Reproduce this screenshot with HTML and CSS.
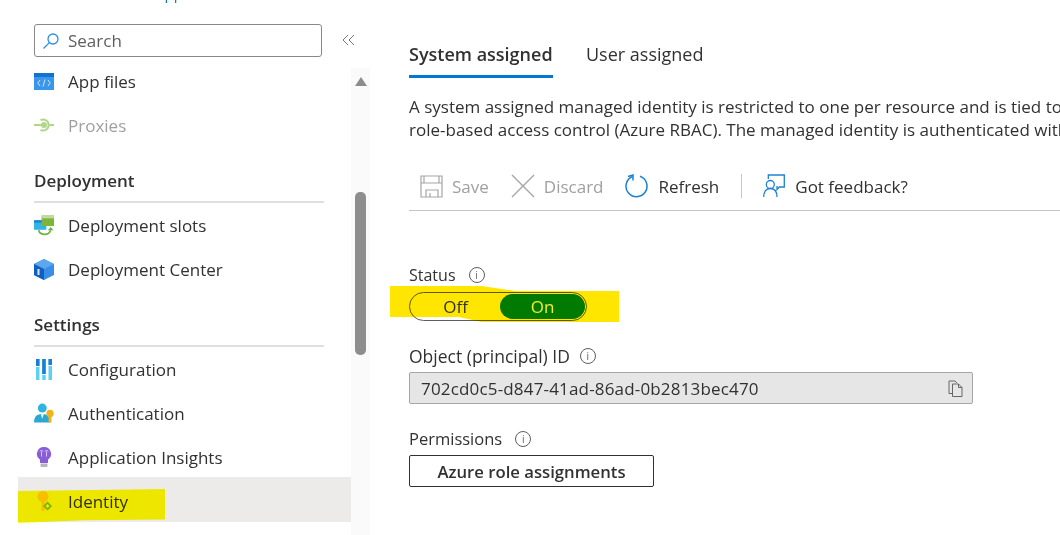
FILE: index.html
```html
<!DOCTYPE html>
<html lang="en">
  <head>
    <meta charset="UTF-8" />
    <meta name="viewport" content="width=device-width, initial-scale=1.0" />
    <title>Identity</title>
    <link rel="stylesheet" href="styles.css">
  </head>
  <body>
    <aside class="sidebar">
      <div class="crumb"><span>App</span></div>
      <div class="search-row">
        <div class="search">
          <svg class="search-icon" width="18" height="18" viewBox="0 0 18 18" fill="none" stroke="#2d8fdf" stroke-width="1.3"><circle cx="11" cy="7" r="5"/><path d="M7.4 10.6 1.5 16.5"/></svg>
          <span>Search</span>
        </div>
        <svg class="collapse" width="13" height="12" viewBox="0 0 13 12" fill="none" stroke="#777" stroke-width="1"><path d="M6 1 1 6l5 5M12 1 7 6l5 5"/></svg>
      </div>
      <div class="sidebar-body">
        <nav class="nav">
          <a class="nav-item">
            <svg width="20" height="17" viewBox="0 0 20 17"><rect width="20" height="17" fill="#3a96ea"/><rect width="20" height="4" fill="#1272cf"/><path d="M6 7 3.8 10 6 13M14 7l2.200 3-2.200 3M11 6.500 9 13.500" fill="none" stroke="#cfe6fb" stroke-width="1"/></svg>
            <span>App files</span>
          </a>
          <a class="nav-item disabled">
            <svg width="20" height="14" viewBox="0 0 20 14" fill="none" stroke="#b0d68a" stroke-width="2"><path d="M0 7h10M15.500 7H20"/><circle cx="10" cy="7" r="2" fill="#b0d68a"/><path d="M6.500 2.200a5.500 5.500 0 1 1 0 9.600"/></svg>
            <span>Proxies</span>
          </a>

          <h2 class="nav-title">Deployment</h2>
          <a class="nav-item">
            <svg width="21" height="21" viewBox="0 0 21 21"><rect x="0" y="5" width="13" height="10" fill="#35b3e6"/><rect x="0" y="5" width="13" height="2.500" fill="#1b85c9"/><rect x="8" y="0" width="13" height="11" fill="#7db53a"/><rect x="8" y="0" width="13" height="3" fill="#c3d9a0"/><path d="M5 15.500c1 5 10 6.500 12.500 0" fill="none" stroke="#6cb33f" stroke-width="1.800"/><path d="M14.500 15.500h6L17.500 12z" fill="#6cb33f"/></svg>
            <span>Deployment slots</span>
          </a>
          <a class="nav-item">
            <svg width="20" height="21" viewBox="0 0 20 21"><path d="M10 0 20 5v11l-10 5L0 16V5z" fill="#3a8ee6"/><path d="M10 0 20 5 10 10 0 5z" fill="#5ea7ee"/><path d="M10 10v11L0 16V5z" fill="#0f5fc0"/><path d="M4.500 10v6" stroke="#d7e9fb" stroke-width="2"/></svg>
            <span>Deployment Center</span>
          </a>

          <h2 class="nav-title">Settings</h2>
          <a class="nav-item">
            <svg width="16" height="21" viewBox="0 0 16 21"><rect x="0" width="3.500" height="21" fill="#5cd1f2"/><rect x="0" width="3.500" height="7" fill="#1a7fd4"/><rect x="0" y="7" width="3.500" height="1" fill="#fff"/><rect x="6.200" width="3.500" height="21" fill="#5cd1f2"/><rect x="6.200" width="3.500" height="15" fill="#1a7fd4"/><rect x="6.200" y="15" width="3.500" height="1" fill="#fff"/><rect x="12.500" width="3.500" height="21" fill="#5cd1f2"/><rect x="12.500" width="3.500" height="6" fill="#1a7fd4"/><rect x="12.500" y="6" width="3.500" height="1" fill="#fff"/></svg>
            <span>Configuration</span>
          </a>
          <a class="nav-item">
            <svg width="21" height="20" viewBox="0 0 21 20"><circle cx="8.700" cy="4.800" r="4.700" fill="#2fb5dd"/><path d="M0 20c0-7 3.500-9 8.700-9s8.300 2 8.300 9z" fill="#2aa8d4"/><path d="M7 11h3.400L8.700 16z" fill="#e8f6fb"/><circle cx="16.800" cy="10.500" r="3.800" fill="#f6b21b"/><rect x="15.300" y="12" width="3" height="8" fill="#f6b21b"/></svg>
            <span>Authentication</span>
          </a>
          <a class="nav-item">
            <svg width="20" height="21" viewBox="0 0 20 21"><path d="M10 0a7 7 0 0 0-4 12.800V16h8v-3.200A7 7 0 0 0 10 0z" fill="#8a5dd8"/><path d="M7.500 4.500v5M12.500 4.500v5M6 4.500c0-1.500 3-1.500 3 0M11 4.500c0-1.500 3-1.500 3 0" stroke="#d9c8f5" stroke-width="1" fill="none"/><rect x="6.500" y="16.500" width="7" height="3.500" rx="1" fill="#b5b5bb"/></svg>
            <span>Application Insights</span>
          </a>
          <a class="nav-item active">
            <svg width="20" height="21" viewBox="0 0 20 21"><circle cx="9" cy="5.500" r="5.500" fill="#f6c21c"/><rect x="7.500" y="8" width="3" height="12" fill="#f6c21c"/><path d="M13.500 10.500 18 15l-4.500 4.500L9 15z" fill="#7cb82f"/><path d="M13.500 13l2 2-2 2-2-2z" fill="#eef06a"/></svg>
            <span>Identity</span>
            <i class="marker marker-nav"></i>
          </a>
        </nav>
        <div class="scrollbar">
          <div class="scroll-up"></div>
          <div class="scroll-thumb"></div>
        </div>
      </div>
    </aside>

    <main class="content">
      <div class="tabs">
        <a class="tab tab-active">System assigned</a>
        <a class="tab">User assigned</a>
      </div>

      <p class="desc">
        <span>A system assigned managed identity is restricted to one per resource and is tied to the lifecycle of this resource. You can grant permissions</span>
        <span>role-based access control (Azure RBAC). The managed identity is authenticated with Azure AD, so you don't have to store any credentials in code.</span>
      </p>

      <div class="toolbar">
        <button class="tool off">
          <svg width="23" height="23" viewBox="0 0 23 23" fill="none" stroke="#a6a6a6" stroke-width="1.200"><path d="M1 1h21v21H1zM1 8h21M4 1v7M19 1v7M6 22v-7h12v7M10 18v4"/></svg>
          Save
        </button>
        <button class="tool off">
          <svg width="24" height="24" viewBox="0 0 24 24" fill="none" stroke="#a6a6a6" stroke-width="1.400"><path d="M1 1l22 22M23 1 1 23"/></svg>
          Discard
        </button>
        <button class="tool">
          <svg width="24" height="24" viewBox="0 0 24 24" fill="none" stroke="#1b82d8" stroke-width="1.500"><path d="M7.500 2.500A10.500 10.500 0 1 0 15 2.300"/><path d="M3 2.500 8 1v5.500"/></svg>
          Refresh
        </button>
        <span class="tool-sep"></span>
        <button class="tool">
          <svg width="24" height="24" viewBox="0 0 24 24" fill="none" stroke="#1b82d8" stroke-width="1.300"><path d="M6.300 5V1h16v12h-5l-2.300 2.500V12"/><circle cx="8.300" cy="10.500" r="4"/><path d="M1.700 23c0-5.500 2.500-8.500 6.600-8.500S15 17.500 15 23"/></svg>
          Got feedback?
        </button>
      </div>

      <div class="field field-status">
        <label class="field-label">Status <i class="info">i</i></label>
        <div class="toggle">
          <i class="marker marker-toggle"></i>
          <span class="toggle-opt">Off</span>
          <span class="toggle-opt toggle-on">On</span>
        </div>
      </div>

      <div class="field field-id">
        <label class="field-label">Object (principal) ID <i class="info">i</i></label>
        <div class="readonly">
          <span>702cd0c5-d847-41ad-86ad-0b2813bec470</span>
          <svg width="15" height="17" viewBox="0 0 15 17" fill="none" stroke="#666" stroke-width="1"><path d="M4.500 13.500H1V1h6l2 2"/><path d="M4.500 4h6l3.500 3.500v9h-9.500zM10.500 4v3.500H14"/></svg>
        </div>
      </div>

      <div class="field field-perm">
        <label class="field-label">Permissions <i class="info">i</i></label>
        <button class="btn">Azure role assignments</button>
      </div>
    </main>
  </body>
</html>
```

FILE: styles.css
```css
html,
body {
  height: 100%;
}

body {
  margin: 0;
  display: flex;
  overflow: hidden;
  background-color: #fff;
  color: #323130;
  font-family: "Open Sans", "Noto Sans", Arial, sans-serif;
  font-size: 17px;
}

/* sidebar */
.sidebar {
  width: 369px;
  flex: none;
  display: flex;
  flex-direction: column;
  height: 535px;
}

.crumb {
  height: 3px;
  overflow: hidden;
  padding-left: 155px;
  color: #0078d4;
  font-size: 15px;
}

.crumb span {
  display: block;
  margin-top: -16px;
  line-height: 20px;
}

.search-row {
  height: 65px;
  flex: none;
  box-sizing: border-box;
  padding: 21px 0 0 34px;
  display: flex;
  align-items: flex-start;
}

.search {
  width: 288px;
  height: 33px;
  box-sizing: border-box;
  border: 1px solid #8a8886;
  border-radius: 3px;
  display: flex;
  align-items: center;
  gap: 8px;
  padding-left: 7px;
  color: #605e5c;
}

.search-icon {
  flex: none;
}

.collapse {
  margin: 10px 0 0 20px;
}

.sidebar-body {
  flex: 1;
  display: flex;
  min-height: 0;
}

.nav {
  width: 351px;
  flex: none;
  box-sizing: border-box;
  padding-left: 18px;
}

.nav-item {
  height: 44px;
  display: flex;
  align-items: center;
  position: relative;
  margin-left: 16px;
}

.nav-item svg {
  flex: none;
  margin-right: 14px;
  width: 20px;
}

.nav-item:first-child {
  margin-top: -9px;
}

.nav-item.disabled {
  color: #a19f9d;
}

.nav-item.active {
  box-sizing: border-box;
  height: 45px;
  margin: -2px 0 0;
  padding: 3px 0 0 16px;
  background-color: #edebe9;
}

.nav-title {
  margin: 22px 27px 0 16px;
  padding-bottom: 8px;
  border-bottom: 2px solid #e1dfdd;
  font-size: 17px;
  line-height: 24px;
  font-weight: 600;
  color: #323130;
}

.scrollbar {
  flex: 1;
  background-color: #fafafa;
  padding: 9px 3px 0 4px;
}

.scroll-up {
  width: 0;
  height: 0;
  border-left: 6px solid transparent;
  border-right: 6px solid transparent;
  border-bottom: 9px solid #8c8c8c;
}

.scroll-thumb {
  height: 163px;
  margin-top: 106px;
  width: 11px;
  border-radius: 5px;
  background-color: #8d8d8d;
}

/* yellow marker strokes, multiplied over the row */
.marker {
  position: absolute;
  mix-blend-mode: multiply;
}

.marker-nav {
  left: 0;
  top: 12px;
  width: 147px;
  height: 34px;
  background-color: #fffb00;
  clip-path: polygon(0 6%, 100% 0, 100% 90%, 45% 92%, 0 100%);
}

.marker-toggle {
  left: -20px;
  top: -7px;
  width: 229px;
  height: 36px;
  background-color: #ffe600;
  clip-path: polygon(0 0, 40% 0, 55% 14%, 100% 14%, 100% 100%, 40% 100%, 30% 86%, 0 86%);
}

/* main panel */
.content {
  flex: 1;
  min-width: 0;
  padding-left: 40px;
  overflow: hidden;
}

.tabs {
  display: flex;
  gap: 33px;
  margin-top: 35px;
  height: 43px;
}

.tab {
  height: 40px;
  line-height: 38px;
  font-size: 18px;
}

.tab-active {
  width: 144px;
  font-weight: 600;
  border-bottom: 3px solid #0078d4;
}

.desc {
  margin: 17px 0 0;
  line-height: 23px;
  font-size: 17px;
  white-space: nowrap;
}

.desc span {
  display: block;
}

.toolbar {
  display: flex;
  align-items: center;
  height: 59px;
  margin-top: 11px;
  padding: 10px 0 0 11px;
  box-sizing: border-box;
  border-bottom: 1px solid #c8c6c4;
}

.tool {
  display: flex;
  align-items: center;
  gap: 9px;
  border: 0;
  padding: 0;
  background: none;
  color: #323130;
  font: inherit;
  margin-right: 22px;
}

.tool.off {
  color: #a19f9d;
}

.tool-sep {
  width: 1px;
  height: 24px;
  background-color: #c8c6c4;
  margin-right: 20px;
}

.field {
  display: flex;
  flex-direction: column;
}

.field-status {
  margin-top: 52px;
}

.field-id {
  margin-top: 23px;
}

.field-perm {
  margin-top: 23px;
}

.field-label {
  line-height: 24px;
  display: flex;
  align-items: center;
  gap: 13px;
  font-size: 16px;
}

.field-id .field-label {
  gap: 10px;
  font-size: 17.5px;
}

.field-perm .field-label {
  font-size: 16.5px;
}

.info {
  width: 14px;
  height: 14px;
  border: 1px solid #605e5c;
  border-radius: 50%;
  font-size: 10px;
  line-height: 14px;
  font-style: normal;
  text-align: center;
  color: #605e5c;
}

.toggle {
  position: relative;
  width: 178px;
  height: 29px;
  margin-top: 5px;
  box-sizing: border-box;
  border: 1px solid #605e5c;
  border-radius: 15px;
  padding: 1px;
  display: flex;
}

.toggle-opt {
  flex: 1;
  text-align: center;
  line-height: 25px;
  position: relative;
}

.toggle-on {
  background-color: #007a00;
  color: #f2ef2a;
  border-radius: 13px;
  flex: none;
  width: 85px;
}

.readonly {
  width: 564px;
  height: 32px;
  margin-top: 4px;
  box-sizing: border-box;
  border: 1px solid #a6a6a6;
  border-radius: 2px;
  background-color: #e6e6e6;
  display: flex;
  align-items: center;
  justify-content: space-between;
  padding: 0 9px 0 11px;
  letter-spacing: 0.17px;
}

.btn {
  width: 245px;
  height: 32px;
  margin-top: 4px;
  border: 1px solid #323130;
  border-radius: 2px;
  background-color: #fff;
  color: #323130;
  font: inherit;
  font-size: 16.7px;
  font-weight: 600;
}
```
